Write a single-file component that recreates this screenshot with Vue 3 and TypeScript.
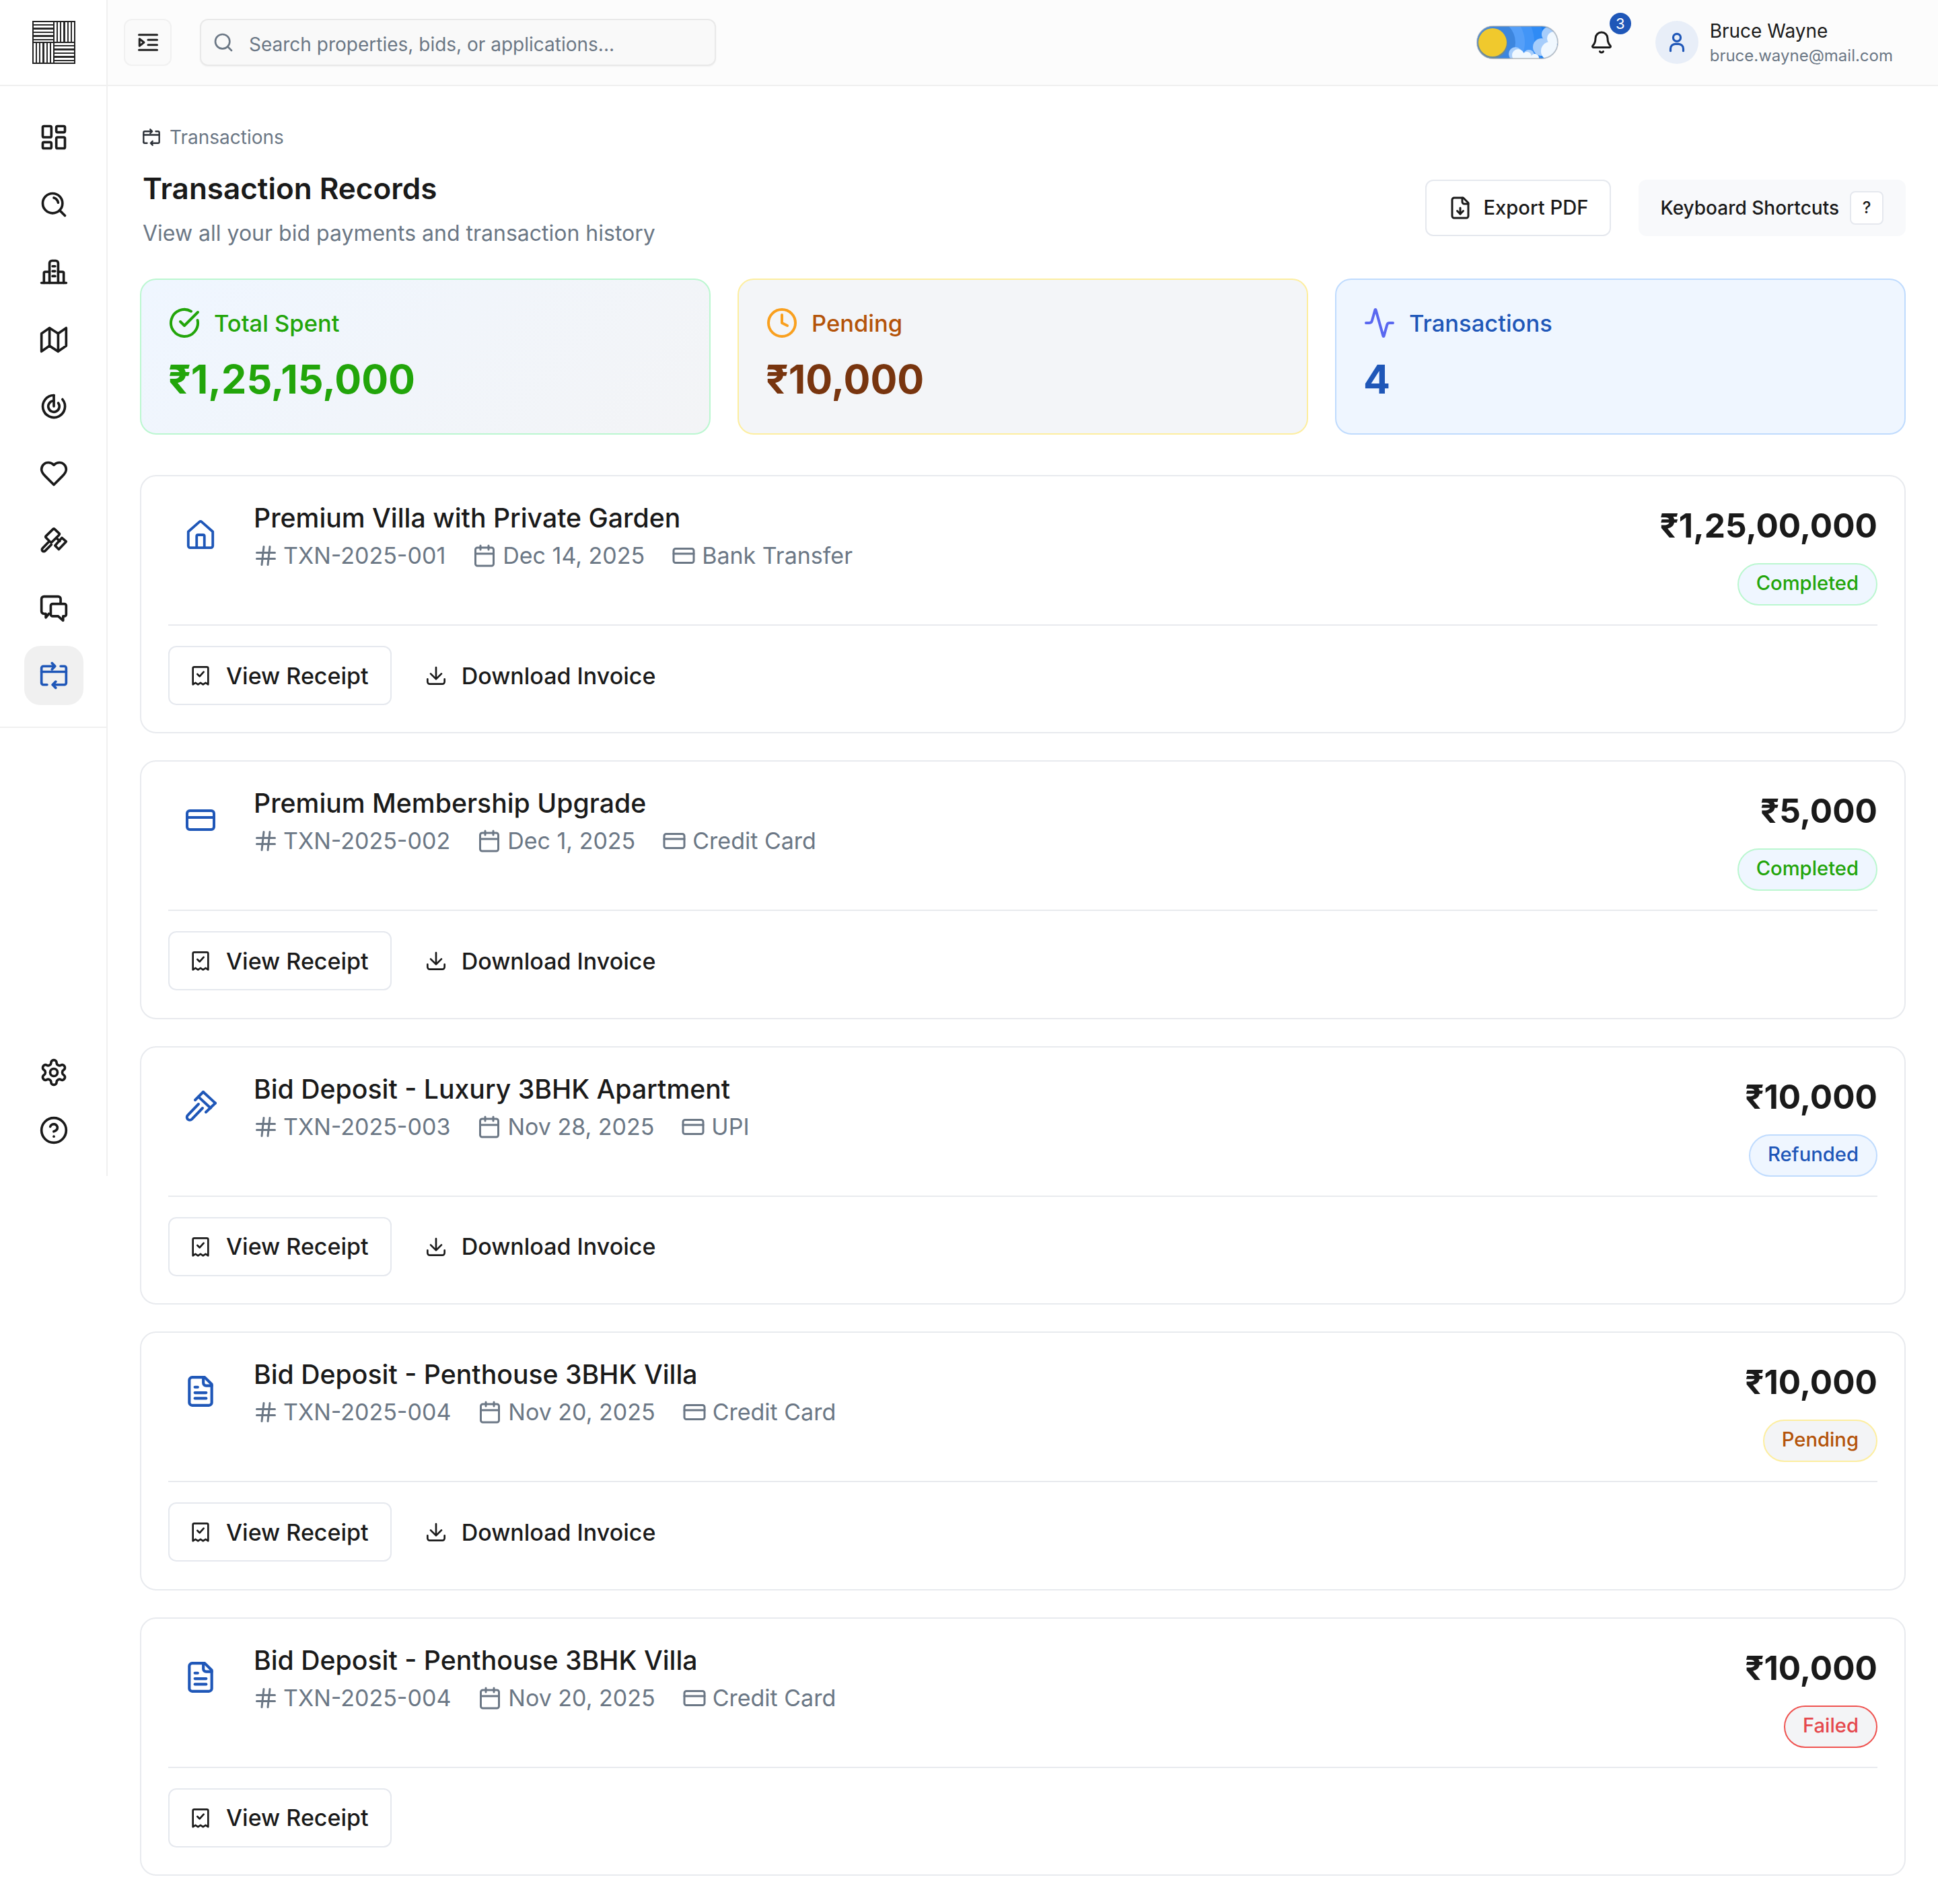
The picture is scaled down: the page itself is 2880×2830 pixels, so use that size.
<script setup lang="ts">
import { h } from 'vue'

const icons: Record<string, string[]> = {
  dashboard: ['M4 3h5a1 1 0 0 1 1 1v7a1 1 0 0 1-1 1H4a1 1 0 0 1-1-1V4a1 1 0 0 1 1-1z', 'M15 3h5a1 1 0 0 1 1 1v3a1 1 0 0 1-1 1h-5a1 1 0 0 1-1-1V4a1 1 0 0 1 1-1z', 'M15 12h5a1 1 0 0 1 1 1v7a1 1 0 0 1-1 1h-5a1 1 0 0 1-1-1v-7a1 1 0 0 1 1-1z', 'M4 16h5a1 1 0 0 1 1 1v3a1 1 0 0 1-1 1H4a1 1 0 0 1-1-1v-3a1 1 0 0 1 1-1z'],
  lens: ['M11 3a8 8 0 1 0 0 16 8 8 0 0 0 0-16z', 'M21 21l-4.300-4.300', 'M12 6.500a5 5 0 0 1 3.500 4'],
  building: ['M2 21h20', 'M8.500 21V5a2 2 0 0 1 2-2h3a2 2 0 0 1 2 2v16', 'M4 21v-8a1 1 0 0 1 1-1h3.500', 'M15.500 12H19a1 1 0 0 1 1 1v8', 'M11 7.500h2', 'M11 11.500h2', 'M11 15.500h2'],
  map: ['M2 7.500 8.500 3l7 4.500L22 3v14.500L15.500 22l-7-4.500L2 22z', 'M8.500 3v14.500', 'M15.500 7.500V22'],
  radar: ['M12 3a9 9 0 1 0 7 3.300', 'M12 7.500a4.500 4.500 0 1 0 3.600 1.800', 'M12 3v9'],
  heart: ['M19 14c1.490-1.460 3-3.210 3-5.500A5.500 5.500 0 0 0 16.500 3c-1.760 0-3 .5-4.500 2-1.500-1.500-2.740-2-4.500-2A5.500 5.500 0 0 0 2 8.500c0 2.300 1.500 4.050 3 5.500l7 7Z'],
  gavel: ['M11.300 2.500 5.700 8a1 1 0 0 0 0 1.400l3.400 3.400a1 1 0 0 0 1.400 0L16.200 7.200a1 1 0 0 0 0-1.400l-3.500-3.300a1 1 0 0 0-1.400 0z', 'M18.500 9.500 22 12.500 16 18.800 13 15.800z', 'M14.200 9.800 16.800 12.200', 'M7.800 12.800 2.800 18a1.400 1.400 0 0 0 2.100 2.100L10 15'],
  chat: ['M8 16.500 5.500 19.500v-3H4a2 2 0 0 1-2-2v-10a2 2 0 0 1 2-2h11.500a2 2 0 0 1 2 2V8', 'M11 8.500h9.500a1.500 1.500 0 0 1 1.500 1.500v7a1.500 1.500 0 0 1-1.500 1.500h-1v3.500L15.500 18.500H11A1.500 1.500 0 0 1 9.500 17v-7A1.500 1.500 0 0 1 11 8.500z'],
  txn: ['M2 9h20', 'M2 18V6a1.500 1.500 0 0 1 1.500-1.500H12', 'M10.500 2l2.500 2.500L10.500 7', 'M17.500 4.500h3A1.500 1.500 0 0 1 22 6v12a1.500 1.500 0 0 1-1.500 1.500H12', 'M13.500 17 11 19.500 13.500 22', 'M2 18a1.500 1.500 0 0 0 1.500 1.500H6.500'],
  gear: ['M12.220 2h-.44a2 2 0 0 0-2 2v.18a2 2 0 0 1-1 1.730l-.43.25a2 2 0 0 1-2 0l-.15-.08a2 2 0 0 0-2.730.73l-.22.38a2 2 0 0 0 .73 2.730l.15.1a2 2 0 0 1 1 1.720v.51a2 2 0 0 1-1 1.740l-.15.09a2 2 0 0 0-.73 2.730l.22.38a2 2 0 0 0 2.730.73l.15-.08a2 2 0 0 1 2 0l.43.25a2 2 0 0 1 1 1.730V20a2 2 0 0 0 2 2h.44a2 2 0 0 0 2-2v-.18a2 2 0 0 1 1-1.730l.43-.25a2 2 0 0 1 2 0l.15.08a2 2 0 0 0 2.730-.73l.22-.39a2 2 0 0 0-.73-2.730l-.15-.08a2 2 0 0 1-1-1.740v-.5a2 2 0 0 1 1-1.740l.15-.09a2 2 0 0 0 .73-2.730l-.22-.38a2 2 0 0 0-2.730-.73l-.15.08a2 2 0 0 1-2 0l-.43-.25a2 2 0 0 1-1-1.730V4a2 2 0 0 0-2-2z', 'M12 9a3 3 0 1 0 0 6 3 3 0 0 0 0-6z'],
  help: ['M12 2a10 10 0 1 0 0 20 10 10 0 0 0 0-20z', 'M9.090 9a3 3 0 0 1 5.830 1c0 2-3 3-3 3', 'M12 17h.01'],
  indent: ['M3 4.500h18', 'M3 19.500h18', 'M12 9.500h9', 'M12 14.500h9', 'M3.500 8.500v7l4.500-3.500z'],
  search: ['M11 3a8 8 0 1 0 0 16 8 8 0 0 0 0-16z', 'M21 21l-4.300-4.300'],
  bell: ['M10.268 21a2 2 0 0 0 3.464 0', 'M3.262 15.326A1 1 0 0 0 4 17h16a1 1 0 0 0 .74-1.673C19.410 13.956 18 12.499 18 8A6 6 0 0 0 6 8c0 4.499-1.411 5.956-2.738 7.326'],
  user: ['M12 4a3.500 3.500 0 1 0 0 7 3.500 3.500 0 0 0 0-7z', 'M6 20v-2a4.500 4.500 0 0 1 4.500-4.500h3A4.500 4.500 0 0 1 18 18v2'],
  filedown: ['M15 2H6a2 2 0 0 0-2 2v16a2 2 0 0 0 2 2h12a2 2 0 0 0 2-2V7Z', 'M14 2v4a2 2 0 0 0 2 2h4', 'M12 18v-6', 'm9 15 3 3 3-3'],
  check: ['M21.801 10A10 10 0 1 1 17 3.335', 'm9 11 3 3L22 4'],
  clock: ['M12 2a10 10 0 1 0 0 20 10 10 0 0 0 0-20z', 'M12 6v6l4 2'],
  activity: ['M22 12h-2.480a2 2 0 0 0-1.930 1.460l-2.350 8.360a.25.25 0 0 1-.48 0L9.240 2.180a.25.25 0 0 0-.48 0l-2.350 8.360A2 2 0 0 1 4.490 12H2'],
  home: ['M2.500 9.500 11 2a1.500 1.500 0 0 1 2 0l8.500 7.500V20.500a1.500 1.500 0 0 1-1.500 1.500H4a1.500 1.500 0 0 1-1.500-1.500z', 'M9 22v-9a1 1 0 0 1 1-1h4a1 1 0 0 1 1 1v9'],
  card: ['M4 5h16a2 2 0 0 1 2 2v10a2 2 0 0 1-2 2H4a2 2 0 0 1-2-2V7a2 2 0 0 1 2-2z', 'M2 10h20'],
  hammer: ['M8 7.500 14 1.500', 'M23 9.800 16 16.500', 'M14 1.500 23 9.800', 'M10.500 5.200 19.500 13.500', 'M10.500 10.500 2.500 18.800a2 2 0 0 0 3 3L13.500 13.500'],
  file: ['M15 2H6a2 2 0 0 0-2 2v16a2 2 0 0 0 2 2h12a2 2 0 0 0 2-2V7Z', 'M14 2v4a2 2 0 0 0 2 2h4', 'M10 9H8', 'M16 13H8', 'M16 17H8'],
  hash: ['M3 9h18', 'M3 15h18', 'M10 3 8 21', 'M16 3l-2 18'],
  calendar: ['M8 2v4', 'M16 2v4', 'M5 4h14a2 2 0 0 1 2 2v14a2 2 0 0 1-2 2H5a2 2 0 0 1-2-2V6a2 2 0 0 1 2-2z', 'M3 10h18'],
  receipt: ['M3.500 4A1.500 1.500 0 0 1 5 2.500h14A1.500 1.500 0 0 1 20.500 4v18l-2.800-1.800-2.900 1.800L12 20.200 9.200 22l-2.900-1.800L3.500 22z', 'M8.500 10.500l2.500 2.500 4.500-5'],
  download: ['M12 3v12', 'm6 10 6 6 6-6', 'M2.500 16v3A2.500 2.500 0 0 0 5 21.500h14a2.500 2.500 0 0 0 2.500-2.500v-3'],
}

const Ico = (props: { name: string; size: number }) =>
  h(
    'svg',
    {
      width: props.size,
      height: props.size,
      viewBox: '0 0 24 24',
      fill: 'none',
      stroke: 'currentColor',
      'stroke-width': 2,
      'stroke-linecap': 'round',
      'stroke-linejoin': 'round',
      style: 'flex:none;display:block',
    },
    icons[props.name].map((d) => h('path', { d })),
  )
Ico.props = ['name', 'size']

const navItems = ['dashboard', 'lens', 'building', 'map', 'radar', 'heart', 'gavel', 'chat', 'txn']

const stats = [
  { key: 'spent', icon: 'check', label: 'Total Spent', value: '₹1,25,15,000' },
  { key: 'pending', icon: 'clock', label: 'Pending', value: '₹10,000' },
  { key: 'count', icon: 'activity', label: 'Transactions', value: '4' },
]

const txnIconSize: Record<string, number> = { home: 46, card: 48, hammer: 48, file: 50 }

const txns = [
  { icon: 'home', title: 'Premium Villa with Private Garden', id: 'TXN-2025-001', date: 'Dec 14, 2025', method: 'Bank Transfer', amount: '₹1,25,00,000', status: 'Completed', invoice: true },
  { icon: 'card', title: 'Premium Membership Upgrade', id: 'TXN-2025-002', date: 'Dec 1, 2025', method: 'Credit Card', amount: '₹5,000', status: 'Completed', invoice: true },
  { icon: 'hammer', title: 'Bid Deposit - Luxury 3BHK Apartment', id: 'TXN-2025-003', date: 'Nov 28, 2025', method: 'UPI', amount: '₹10,000', status: 'Refunded', invoice: true },
  { icon: 'file', title: 'Bid Deposit - Penthouse 3BHK Villa', id: 'TXN-2025-004', date: 'Nov 20, 2025', method: 'Credit Card', amount: '₹10,000', status: 'Pending', invoice: true },
  { icon: 'file', title: 'Bid Deposit - Penthouse 3BHK Villa', id: 'TXN-2025-004', date: 'Nov 20, 2025', method: 'Credit Card', amount: '₹10,000', status: 'Failed', invoice: false },
]
</script>

<template>
  <div class="app">
    <header class="topbar">
      <div class="logo-cell">
        <div class="logo">
          <i class="hz"></i><i class="vt"></i><i class="vt"></i><i class="hz"></i>
        </div>
      </div>
      <div class="topbar-main">
        <button class="menu-btn"><Ico name="indent" :size="36" /></button>
        <div class="search">
          <Ico name="search" :size="32" />
          <span>Search properties, bids, or applications...</span>
        </div>
        <div class="top-right">
          <svg class="toggle" width="122" height="50" viewBox="0 0 122 50">
            <defs>
              <clipPath id="pill"><rect x="1" y="1" width="120" height="48" rx="24" /></clipPath>
            </defs>
            <g clip-path="url(#pill)">
              <rect width="122" height="50" fill="#1b7ff2" />
              <circle cx="24" cy="25" r="76" fill="#2f8bf5" />
              <circle cx="24" cy="25" r="62" fill="#4295f7" />
              <circle cx="24" cy="25" r="48" fill="#559ff8" />
              <circle cx="24" cy="25" r="34" fill="#3d86de" />
              <circle cx="108" cy="13" r="11" fill="#a6cdfb" />
              <circle cx="97" cy="32" r="13" fill="#a6cdfb" />
              <circle cx="58" cy="42" r="10" fill="#a6cdfb" />
              <circle cx="78" cy="44" r="8" fill="#a6cdfb" />
              <circle cx="115" cy="19" r="10" fill="#f0f8ff" />
              <circle cx="110" cy="38" r="14" fill="#f0f8ff" />
              <circle cx="62" cy="44" r="9" fill="#f0f8ff" />
              <circle cx="75" cy="46" r="7" fill="#f0f8ff" />
              <circle cx="87" cy="48" r="6" fill="#f0f8ff" />
              <circle cx="24" cy="27" r="22" fill="#8a8a60" opacity=".55" />
              <circle cx="24" cy="25" r="21" fill="#f0c92d" />
            </g>
            <rect x="1" y="1" width="120" height="48" rx="24" fill="none" stroke="#9aa0a6" stroke-opacity=".55" stroke-width="2" />
          </svg>
          <div class="bell">
            <Ico name="bell" :size="36" />
            <span class="bell-count">3</span>
          </div>
          <div class="user">
            <div class="avatar"><Ico name="user" :size="38" /></div>
            <div class="user-text">
              <div class="user-name">Bruce Wayne</div>
              <div class="user-mail">bruce.wayne@mail.com</div>
            </div>
          </div>
        </div>
      </div>
    </header>

    <div class="body">
      <aside class="sidebar">
        <nav class="nav">
          <a v-for="n in navItems" :key="n" class="nav-item" :class="{ active: n === 'txn' }">
            <Ico :name="n" :size="44" />
          </a>
        </nav>
        <div class="nav-bottom">
          <a class="bottom-item"><Ico name="gear" :size="44" /></a>
          <a class="bottom-item"><Ico name="help" :size="44" /></a>
        </div>
      </aside>

      <main class="main">
        <div class="crumb"><Ico name="txn" :size="28" /><span>Transactions</span></div>
        <div class="page-head">
          <div>
            <h1>Transaction Records</h1>
            <p>View all your bid payments and transaction history</p>
          </div>
          <div class="head-actions">
            <button class="export"><Ico name="filedown" :size="36" />Export PDF</button>
            <div class="shortcuts">Keyboard Shortcuts<kbd>?</kbd></div>
          </div>
        </div>

        <section class="stats">
          <div v-for="s in stats" :key="s.key" class="stat" :class="s.key">
            <div class="stat-head">
              <span class="stat-icon"><Ico :name="s.icon" :size="48" /></span>
              <span class="stat-label">{{ s.label }}</span>
            </div>
            <div class="stat-value">{{ s.value }}</div>
          </div>
        </section>

        <section class="list">
          <article v-for="(t, i) in txns" :key="i" class="txn">
            <div class="txn-top">
              <div class="txn-icon"><Ico :name="t.icon" :size="txnIconSize[t.icon]" /></div>
              <div class="txn-info">
                <div class="txn-title">{{ t.title }}</div>
                <div class="txn-meta">
                  <span><Ico name="hash" :size="36" />{{ t.id }}</span>
                  <span><Ico name="calendar" :size="36" />{{ t.date }}</span>
                  <span><Ico name="card" :size="36" />{{ t.method }}</span>
                </div>
              </div>
              <div class="txn-right">
                <div class="amount">{{ t.amount }}</div>
                <span class="badge" :class="t.status.toLowerCase()">{{ t.status }}</span>
              </div>
            </div>
            <div class="txn-actions">
              <button class="btn outline"><Ico name="receipt" :size="32" />View Receipt</button>
              <button v-if="t.invoice" class="btn ghost"><Ico name="download" :size="32" />Download Invoice</button>
            </div>
          </article>
        </section>
      </main>
    </div>
  </div>
</template>

<style>
html, body { margin: 0; background: #fff; }
</style>

<style scoped>
.app { width: 2880px; font-family: Inter, "Liberation Sans", sans-serif; color: #1a1a1a; background: #fff; }
button { font-family: inherit; cursor: pointer; }
.topbar { display: flex; height: 128px; box-sizing: border-box; border-bottom: 2px solid #f0f0f0; }
.logo-cell { width: 160px; box-sizing: border-box; border-right: 2px solid #f0f0f0; padding-left: 2px; display: flex; align-items: center; justify-content: center; background: #fff; }
.logo { width: 64px; height: 64px; box-sizing: border-box; border: 2.5px solid #222; display: grid; grid-template-columns: 1fr 1fr; grid-template-rows: 1fr 1fr; gap: 2px; background: #222; }
.logo i { display: block; background-color: #fff; }
.logo .hz { background-image: repeating-linear-gradient(to bottom, #fff 0 3px, #2a2a2a 3px 5.4px); }
.logo .vt { background-image: repeating-linear-gradient(to right, #fff 0 3px, #2a2a2a 3px 5.2px); }
.topbar-main { flex: 1; display: flex; align-items: center; padding: 0 67px 0 24px; background: #fcfcfc; }
.menu-btn { width: 71px; height: 70px; padding: 0; display: flex; align-items: center; justify-content: center; background: #fafafa; border: 2px solid #f1f1f1; border-radius: 12px; color: #222; }
.search { margin-left: 42px; width: 767px; height: 70px; box-sizing: border-box; display: flex; align-items: center; gap: 22px; padding: 0 17px; background: #f9f9f9; border: 2px solid #e9e9e9; border-radius: 12px; box-shadow: 0 1px 2px rgba(0,0,0,.05); color: #6b7785; font-size: 28px; }
.search span { padding-top: 6px; }
.top-right { margin-left: auto; display: flex; align-items: center; }
.toggle { display: block; }
.bell { position: relative; margin-left: 44px; width: 40px; display: flex; justify-content: center; color: #1a1a1a; }
.bell-count { position: absolute; left: 32px; top: -26px; width: 32px; height: 32px; border-radius: 50%; background: #1f57b8; color: #fff; font-size: 22px; line-height: 32px; text-align: center; }
.user { margin-left: 60px; display: flex; align-items: center; gap: 17px; }
.avatar { width: 64px; height: 64px; border-radius: 50%; background: #e8eef8; color: #1f57b8; display: flex; align-items: center; justify-content: center; }
.user-name { font-size: 28px; line-height: 38px; font-weight: 400; }
.user-mail { margin-top: 1px; font-size: 24px; line-height: 34px; color: #6b7785; }
.body { display: flex; align-items: flex-start; }
.sidebar { width: 160px; height: 1620px; box-sizing: border-box; flex: none; border-right: 2px solid #f0f0f0; display: flex; flex-direction: column; }
.nav { display: flex; flex-direction: column; gap: 12px; padding: 32px 0 32px 36px; border-bottom: 2px solid #f0f0f0; }
.nav-item { width: 88px; height: 88px; display: flex; align-items: center; justify-content: center; border-radius: 24px; color: #1a1a1a; }
.nav-item.active { background: #f0f0f0; color: #1f57b8; }
.nav-bottom { margin-top: auto; padding-bottom: 46px; display: flex; flex-direction: column; gap: 42px; }
.bottom-item { height: 44px; padding-left: 58px; display: flex; align-items: center; color: #1a1a1a; }
.main { flex: 1; min-width: 0; padding: 60px 48px 42px; box-sizing: border-box; }
.crumb { display: flex; align-items: center; gap: 13px; height: 32px; padding-left: 3px; font-size: 28px; color: #6b7785; }
.crumb svg { color: #2a2f36; }
.page-head { display: flex; align-items: center; justify-content: space-between; margin-top: 28px; padding-left: 4px; }
h1 { margin: 0; font-size: 44px; line-height: 64px; font-weight: 600; }
.page-head p { margin: 13px 0 0; font-size: 32px; line-height: 44px; color: #6b7785; }
.head-actions { display: flex; align-items: center; gap: 41px; }
.export { height: 84px; box-sizing: border-box; display: flex; align-items: center; gap: 16px; padding: 0 32px 0 32px; background: #fff; border: 2px solid #e5e8ee; border-radius: 12px; font-size: 29.2px; font-weight: 500; color: #1a1a1a; }
.shortcuts { height: 84px; box-sizing: border-box; display: flex; align-items: center; gap: 16px; padding: 0 33px 0 32px; background: #f8f9fb; border-radius: 12px; font-size: 28px; font-weight: 500; }
kbd { width: 50px; height: 50px; box-sizing: border-box; display: flex; align-items: center; justify-content: center; background: #fff; border: 2px solid #e5e8ee; border-radius: 8px; font-family: inherit; font-size: 24px; }
.stats { display: grid; grid-template-columns: repeat(3, 1fr); gap: 40px; margin-top: 45px; }
.stat { box-sizing: border-box; height: 232px; padding: 40px 40px; border: 2px solid; border-radius: 24px; }
.stat-head { display: flex; align-items: center; gap: 20px; font-size: 34.5px; font-weight: 500; height: 48px; }
.stat-label { margin-bottom: 0; }
.stat-value { margin-top: 22px; font-size: 59.2px; line-height: 76px; font-weight: 700; }
.stat.spent { background: linear-gradient(135deg, #eff6ff, #f3f4f6); border-color: #bbf7d0; color: #22a50a; }
.stat.pending { background: #f3f5f8; border-color: #fdee9f; color: #b45309; }
.stat.pending .stat-icon { color: #f9a01f; }
.stat.pending .stat-value { color: #78350f; }
.stat.count { background: #eff6ff; border-color: #bfdbfe; color: #1f57b8; }
.stat.count .stat-icon { color: #5a68f0; }
.stat-icon { display: block; }
.list { display: flex; flex-direction: column; gap: 40px; margin-top: 60px; }
.txn { height: 384.4px; box-sizing: border-box; padding: 40px; border: 2px solid #e8eaee; border-radius: 24px; background: #fff; }
.txn-top { display: flex; align-items: flex-start; height: 182px; box-sizing: border-box; border-bottom: 2px solid #e8eaee; }
.txn-icon { width: 96px; height: 94px; flex: none; display: flex; align-items: center; justify-content: center; color: #1f57b8; }
.txn-info { margin-left: 31px; flex: 1; }
.txn-title { font-size: 39.2px; line-height: 44px; font-weight: 500; }
.txn-meta { display: flex; gap: 40px; margin-top: 12px; font-size: 34px; line-height: 44px; color: #6b7785; }
.txn-meta span { display: flex; align-items: center; gap: 9px; }
.txn-meta span:first-child { gap: 8px; }
.txn-right { display: flex; flex-direction: column; align-items: flex-end; }
.amount { margin-top: 1px; font-size: 49.5px; line-height: 64px; font-weight: 700; }
.badge { margin-top: 24px; height: 63px; box-sizing: border-box; display: flex; align-items: center; padding: 0 26px 4px; border: 2px solid; border-radius: 32px; font-size: 29.2px; font-weight: 500; }
.badge.completed { background: #eff6ff; border-color: #bbf7d0; color: #22a50a; }
.badge.refunded { background: #eff6ff; border-color: #bfdbfe; color: #1f57b8; }
.badge.pending { background: #f3f4f6; border-color: #fdee9f; color: #b45309; }
.badge.failed { background: #f3f4f6; border-color: #ef5350; color: #e5484d; }
.txn-actions { display: flex; gap: 18px; padding-top: 30px; }
.btn { height: 88px; box-sizing: border-box; display: flex; align-items: center; gap: 22px; padding: 0 32px 0 30px; border-radius: 12px; font-size: 34px; font-weight: 500; color: #1a1a1a; background: #fff; border: 2px solid transparent; }
.btn.outline { border-color: #e5e8ee; }
</style>
